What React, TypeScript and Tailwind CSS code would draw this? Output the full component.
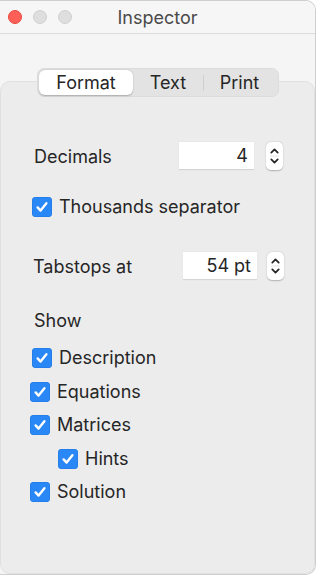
import React from 'react';

const font = { fontFamily: 'Inter, "Noto Sans", sans-serif' };

const Check: React.FC = () => (
    <span className="w-[20px] h-[20px] rounded-[4px] bg-[#2a87f6] flex items-center justify-center shrink-0 shadow-[inset_0_0_0_0.5px_#1f76e0]">
        <svg width="14" height="14" viewBox="0 0 14 14" fill="none">
            <path d="M2.6 7.4 L5.6 10.6 L11.4 3.2" stroke="white" strokeWidth="2.4" strokeLinecap="round" strokeLinejoin="round" />
        </svg>
    </span>
);

const CheckRow: React.FC<{ label: string; className: string }> = ({ label, className }) => (
    <div className={`flex items-center h-[20px] ${className}`}>
        <Check />
        <span className="ml-[7px] text-[18px] leading-[20px] text-[#262626]">{label}</span>
    </div>
);

const Stepper: React.FC = () => (
    <div className="w-[17px] h-[28px] bg-white rounded-[5px] shadow-[0_0.5px_1.5px_rgba(0,0,0,0.25)] flex flex-col items-center justify-center">
        <svg width="11" height="22" viewBox="0 0 11 22" fill="none">
            <path d="M2.3 7.6 L5.5 4.4 L8.7 7.6" stroke="#262626" strokeWidth="1.8" strokeLinecap="round" strokeLinejoin="round" />
            <line x1="1" y1="11" x2="10" y2="11" stroke="#e2e2e2" strokeWidth="1" />
            <path d="M2.3 14.4 L5.5 17.6 L8.7 14.4" stroke="#262626" strokeWidth="1.8" strokeLinecap="round" strokeLinejoin="round" />
        </svg>
    </div>
);

const NumberField: React.FC<{ value: string; width: string }> = ({ value, width }) => (
    <div className={`${width} h-[28px] bg-white border-b border-[#d4d4d4] shadow-[0_0_0_0.5px_#e4e4e4] flex items-center justify-end pr-[6px] text-[18px] text-[#262626]`}>
        {value}
    </div>
);

export default function App() {
    return (
        <div className="w-[320px] h-[578px] bg-white overflow-hidden" style={font}>
            {/* Window */}
            <div className="w-[316px] h-[575px] bg-[#f5f5f5] rounded-tr-[10px] rounded-br-[10px] border-r border-b border-t border-[#cfcfcf] flex flex-col overflow-hidden">
                {/* Title bar */}
                <div className="h-[33px] shrink-0 bg-[#f6f6f6] border-b border-[#dcdcdc] grid grid-cols-[1fr_auto_1fr] items-center">
                    <div className="flex items-center gap-[11px] pl-[8px]">
                        <span className="w-[14px] h-[14px] rounded-full bg-[#fe5f57] border border-[#e8483f]" />
                        <span className="w-[14px] h-[14px] rounded-full bg-[#dedede] border border-[#d0d0d0]" />
                        <span className="w-[14px] h-[14px] rounded-full bg-[#dedede] border border-[#d0d0d0]" />
                    </div>
                    <div className="text-[18px] text-[#4a4a4a]">Inspector</div>
                    <div />
                </div>

                {/* Body */}
                <div className="flex-1 flex flex-col pt-[34px]">
                    {/* Segmented control */}
                    <div className="relative z-10 ml-[37px] w-[242px] h-[29px] rounded-[7px] bg-[#e3e3e3] border border-[#dcdcdc] flex items-center p-px text-[18px] text-[#262626]">
                        <div className="w-[94px] h-full bg-white rounded-[6px] shadow-[0_0.5px_1.5px_rgba(0,0,0,0.25)] flex items-center justify-center">Format</div>
                        <div className="w-[70px] flex items-center justify-center">Text</div>
                        <div className="w-px h-[16px] bg-[#cfcfcf]" />
                        <div className="flex-1 flex items-center justify-center pr-[2px]">Print</div>
                    </div>

                    {/* Group box */}
                    <div className="-mt-[16px] flex-1 rounded-[10px] border border-[#e0e0e0] bg-[#ececec] flex flex-col text-[#262626]">
                        <div className="mt-[60px] flex items-center pl-[33px]">
                            <span className="w-[145px] text-[18px]">Decimals</span>
                            <NumberField value="4" width="w-[75px]" />
                            <div className="ml-[12px]"><Stepper /></div>
                        </div>

                        <CheckRow label="Thousands separator" className="mt-[27px] pl-[31px]" />

                        <div className="mt-[35px] flex items-center pl-[32px]">
                            <span className="w-[150px] text-[18px]">Tabstops at</span>
                            <NumberField value="54 pt" width="w-[74px]" />
                            <div className="ml-[10px]"><Stepper /></div>
                        </div>

                        <div className="mt-[31px] pl-[33px] text-[18px] leading-[20px]">Show</div>

                        <CheckRow label="Description" className="mt-[17px] pl-[31px]" />
                        <CheckRow label="Equations" className="mt-[14px] pl-[29px]" />
                        <CheckRow label="Matrices" className="mt-[13px] pl-[29px]" />
                        <CheckRow label="Hints" className="mt-[14px] pl-[57px]" />
                        <CheckRow label="Solution" className="mt-[13px] pl-[29px]" />
                    </div>
                </div>
            </div>
        </div>
    );
}
